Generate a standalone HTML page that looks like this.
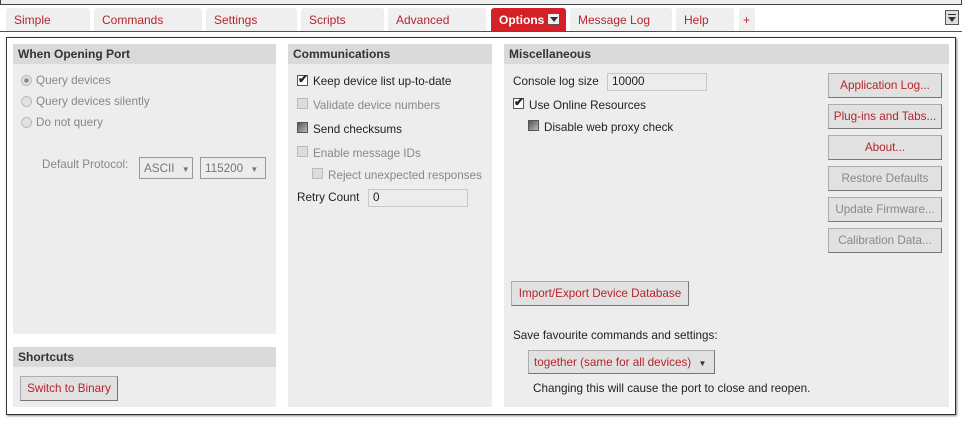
<!DOCTYPE html>
<html><head><meta charset="utf-8"><style>
*{margin:0;padding:0;box-sizing:border-box}
body{width:962px;height:421px;background:#fff;font-family:"Liberation Sans",sans-serif;font-size:11.7px;color:#222;position:relative;overflow:hidden}
.a{position:absolute;white-space:nowrap}
.tab{position:absolute;top:8px;height:23px;background:#efefef;border-radius:3px 3px 0 0;color:#b8242c;padding:5px 0 0 8px;font-size:12px;white-space:nowrap}
.panel{position:absolute;background:#ededed}
.hd{position:absolute;left:0;right:0;top:0;height:20px;background:#dadada;font-weight:bold;font-size:12px;color:#333;padding:3px 0 0 5px}
.btn{position:absolute;background:#e1e1e1;border:1px solid #adadad;border-right-color:#777;border-bottom-color:#777;color:#b8242c;text-align:center;padding-top:5px;white-space:nowrap}
.dis{color:#888}
.cb{position:absolute;width:11px;height:11px;border:1px solid #555;background:linear-gradient(135deg,#555,#bbb)}
.cbd{position:absolute;width:11px;height:11px;border:1px solid #bbb;background:#ddd}
.rd{position:absolute;width:11px;height:11px;border-radius:50%;border:1px solid #bbb;background:#e2e2e2}
.inp{position:absolute;background:#ececec;border:1px solid #c8c8c8;padding:1px 0 0 4px;white-space:nowrap}
.g{color:#888}
</style></head><body>
<div class="a" style="left:0;top:0;width:962px;height:5px;border:1px solid #444;border-top:none;background:#eee"></div>
<div class="tab" style="left:6px;width:84px">Simple</div>
<div class="tab" style="left:94px;width:108px">Commands</div>
<div class="tab" style="left:206px;width:91px">Settings</div>
<div class="tab" style="left:301px;width:83px">Scripts</div>
<div class="tab" style="left:388px;width:98px">Advanced</div>
<div class="tab" style="left:491px;width:75px;background:#d42027;color:#fff;font-weight:bold">Options<span style="position:absolute;left:56px;top:5px;width:13px;height:12px;background:#eee;border:1px solid #555"><span style="position:absolute;left:2px;top:3px;border-left:4px solid transparent;border-right:4px solid transparent;border-top:5px solid #333"></span></span></div>
<div class="tab" style="left:570px;width:102px">Message Log</div>
<div class="tab" style="left:676px;width:58px">Help</div>
<div class="tab" style="left:739px;width:16px;padding-left:4px">+</div>
<div class="a" style="left:945px;top:10px;width:14px;height:15px;border:1px solid #555;background:#ddd"><div class="a" style="left:2px;top:3px;width:8px;height:1px;background:#333"></div><div class="a" style="left:2px;top:6px;border-left:4px solid transparent;border-right:4px solid transparent;border-top:5px solid #333"></div></div>
<div class="a" style="left:0;top:31px;width:962px;height:1px;background:#b8242c"></div>
<div class="a" style="left:6px;top:37px;width:950px;height:378px;border:1px solid #333;box-shadow:1px 1px 2px #888"></div>

<div class="panel" style="left:13px;top:44px;width:263px;height:290px"><div class="hd">When Opening Port</div></div>
<div class="rd" style="left:21px;top:75px;background:radial-gradient(circle,#888 30%,#e2e2e2 40%)"></div><div class="a g" style="left:36px;top:74px">Query devices</div>
<div class="rd" style="left:21px;top:96px"></div><div class="a g" style="left:36px;top:95px">Query devices silently</div>
<div class="rd" style="left:21px;top:117px"></div><div class="a g" style="left:36px;top:116px">Do not query</div>
<div class="a g" style="left:42px;top:158px">Default Protocol:</div>
<div class="inp" style="left:139px;top:157px;width:54px;height:22px;border-color:#999;padding-top:4px;color:#777">ASCII <span style="font-size:8px;margin-left:4px">▼</span></div>
<div class="inp" style="left:200px;top:157px;width:66px;height:22px;border-color:#999;padding-top:4px;color:#777">115200 <span style="font-size:8px;margin-left:4px">▼</span></div>

<div class="panel" style="left:13px;top:347px;width:263px;height:60px"><div class="hd">Shortcuts</div></div>
<div class="btn" style="left:20px;top:376px;width:98px;height:25px">Switch to Binary</div>

<div class="panel" style="left:288px;top:44px;width:204px;height:363px"><div class="hd">Communications</div></div>
<div class="cb" style="left:297px;top:75px;background:#fff"><span class="a" style="left:0;top:-4px;font-size:12px;color:#222;font-weight:bold">✔</span></div><div class="a" style="left:313px;top:75px">Keep device list up-to-date</div>
<div class="cbd" style="left:297px;top:98px"></div><div class="a g" style="left:313px;top:99px">Validate device numbers</div>
<div class="cb" style="left:297px;top:122px"></div><div class="a" style="left:313px;top:123px">Send checksums</div>
<div class="cbd" style="left:297px;top:146px"></div><div class="a g" style="left:313px;top:147px">Enable message IDs</div>
<div class="cbd" style="left:312px;top:168px"></div><div class="a g" style="left:328px;top:169px">Reject unexpected responses</div>
<div class="a" style="left:297px;top:191px">Retry Count</div>
<div class="inp" style="left:368px;top:189px;width:100px;height:18px">0</div>

<div class="panel" style="left:504px;top:44px;width:445px;height:363px"><div class="hd">Miscellaneous</div></div>
<div class="a" style="left:513px;top:75px">Console log size</div>
<div class="inp" style="left:607px;top:73px;width:100px;height:18px">10000</div>
<div class="cb" style="left:513px;top:98px;background:#fff"><span class="a" style="left:0;top:-4px;font-size:12px;color:#222;font-weight:bold">✔</span></div><div class="a" style="left:529px;top:99px">Use Online Resources</div>
<div class="cb" style="left:528px;top:120px"></div><div class="a" style="left:544px;top:121px">Disable web proxy check</div>
<div class="btn" style="left:828px;top:73px;width:114px;height:25px">Application Log...</div>
<div class="btn" style="left:828px;top:104px;width:114px;height:25px">Plug-ins and Tabs...</div>
<div class="btn" style="left:828px;top:135px;width:114px;height:25px">About...</div>
<div class="btn dis" style="left:828px;top:166px;width:114px;height:25px">Restore Defaults</div>
<div class="btn dis" style="left:828px;top:197px;width:114px;height:25px">Update Firmware...</div>
<div class="btn dis" style="left:828px;top:228px;width:114px;height:25px">Calibration Data...</div>
<div class="btn" style="left:511px;top:281px;width:178px;height:25px">Import/Export Device Database</div>
<div class="a" style="left:513px;top:329px">Save favourite commands and settings:</div>
<div class="btn" style="left:528px;top:350px;width:187px;height:24px;text-align:left;padding-left:5px">together (same for all devices) <span style="color:#333;font-size:8px;margin-left:4px">▼</span></div>
<div class="a" style="left:533px;top:382px">Changing this will cause the port to close and reopen.</div>
</body></html>
